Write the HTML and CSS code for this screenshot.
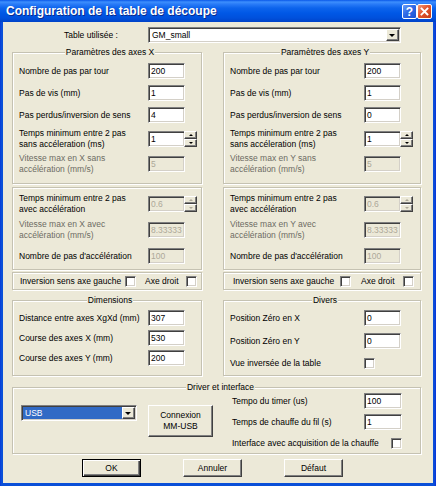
FILE: index.html
```html
<!DOCTYPE html>
<html lang="fr">
<head>
<meta charset="utf-8">
<title>Configuration de la table de découpe</title>
<link rel="stylesheet" href="styles.css">
</head>
<body>
<div class="window">
  <div class="titlebar">
    <span class="title">Configuration de la table de découpe</span>
    <div class="tb-buttons">
      <span class="tb-btn help">?</span>
      <span class="tb-btn close"><svg viewBox="0 0 13 13" width="13" height="13"><path d="M3.5 3.5 L9.5 9.5 M9.5 3.5 L3.5 9.5" stroke="#fff" stroke-width="1.8" stroke-linecap="square"/></svg></span>
    </div>
  </div>
  <div class="client">
    <div class="table-row">
      <span class="table-label">Table utilisée :</span>
      <div class="combo wide"><span class="combo-text">GM_small</span><span class="drop"><i class="tri"></i></span></div>
    </div>

    <div class="cols">
      <!-- Colonne X -->
      <div class="col col-x">
        <fieldset class="group">
          <legend>Paramètres des axes X</legend>
          <div class="row h22"><span class="lab">Nombre de pas par tour</span><span class="edit">200</span></div>
          <div class="row h22"><span class="lab">Pas de vis (mm)</span><span class="edit">1</span></div>
          <div class="row h22"><span class="lab">Pas perdus/inversion de sens</span><span class="edit">4</span></div>
          <div class="row h25"><span class="lab">Temps minimum entre 2 pas<br>sans accéleration (ms)</span><span class="edit">1</span><span class="spin"><i class="sb"><b class="up"></b></i><i class="sb"><b class="dn"></b></i></span></div>
          <div class="row h25"><span class="lab dim">Vitesse max en X sans<br>accélération (mm/s)</span><span class="edit off">5</span></div>
        </fieldset>
        <div class="frame">
          <div class="row h26"><span class="lab">Temps minimum entre 2 pas<br>avec accélération</span><span class="edit off">0.6</span><span class="spin off"><i class="sb"><b class="up"></b></i><i class="sb"><b class="dn"></b></i></span></div>
          <div class="row h26"><span class="lab dim">Vitesse max en X avec<br>accélération (mm/s)</span><span class="edit off">8.33333</span></div>
          <div class="row h26"><span class="lab">Nombre de pas d'accélération</span><span class="edit off">100</span></div>
        </div>
        <div class="frame inv">
          <span>Inversion sens axe gauche</span><span class="chk"></span><span class="axe">Axe droit</span><span class="chk"></span>
        </div>
      </div>

      <!-- Colonne Y -->
      <div class="col col-y">
        <fieldset class="group">
          <legend>Paramètres des axes Y</legend>
          <div class="row h22"><span class="lab">Nombre de pas par tour</span><span class="edit">200</span></div>
          <div class="row h22"><span class="lab">Pas de vis (mm)</span><span class="edit">1</span></div>
          <div class="row h22"><span class="lab">Pas perdus/inversion de sens</span><span class="edit">0</span></div>
          <div class="row h25"><span class="lab">Temps minimum entre 2 pas<br>sans accéleration (ms)</span><span class="edit">1</span><span class="spin"><i class="sb"><b class="up"></b></i><i class="sb"><b class="dn"></b></i></span></div>
          <div class="row h25"><span class="lab dim">Vitesse max en Y sans<br>accélération (mm/s)</span><span class="edit off">5</span></div>
        </fieldset>
        <div class="frame">
          <div class="row h26"><span class="lab">Temps minimum entre 2 pas<br>avec accélération</span><span class="edit off">0.6</span><span class="spin off"><i class="sb"><b class="up"></b></i><i class="sb"><b class="dn"></b></i></span></div>
          <div class="row h26"><span class="lab dim">Vitesse max en Y avec<br>accélération (mm/s)</span><span class="edit off">8.33333</span></div>
          <div class="row h26"><span class="lab">Nombre de pas d'accélération</span><span class="edit off">100</span></div>
        </div>
        <div class="frame inv">
          <span>Inversion sens axe gauche</span><span class="chk"></span><span class="axe">Axe droit</span><span class="chk"></span>
        </div>
      </div>

      <fieldset class="group col-x second">
        <legend>Dimensions</legend>
        <div class="row h20"><span class="lab">Distance entre axes XgXd (mm)</span><span class="edit">307</span></div>
        <div class="row h20"><span class="lab">Course des axes X (mm)</span><span class="edit">530</span></div>
        <div class="row h20"><span class="lab">Course des axes Y (mm)</span><span class="edit">200</span></div>
      </fieldset>

      <fieldset class="group col-y second divers">
        <legend>Divers</legend>
        <div class="row h20"><span class="lab">Position Zéro en X</span><span class="edit">0</span></div>
        <div class="row h20"><span class="lab">Position Zéro en Y</span><span class="edit">0</span></div>
        <div class="row h18"><span class="lab">Vue inversée de la table</span><span class="chk"></span></div>
      </fieldset>

      <fieldset class="group driver">
        <legend>Driver et interface</legend>
        <div class="drv">
          <div class="combo usb"><span class="combo-text sel">USB</span><span class="drop"><i class="tri"></i></span></div>
          <button class="btn connect">Connexion<br>MM-USB</button>
          <div class="drv-right">
            <span class="lab">Tempo du timer (us)</span><span class="edit">100</span>
            <span class="lab">Temps de chauffe du fil (s)</span><span class="edit">1</span>
            <div class="chkrow"><span>Interface avec acquisition de la chauffe</span><span class="chk"></span></div>
          </div>
        </div>
      </fieldset>
    </div>

    <div class="buttons">
      <button class="btn def">OK</button>
      <button class="btn">Annuler</button>
      <button class="btn">Défaut</button>
    </div>
  </div>
</div>
</body>
</html>
```

FILE: styles.css
```css
* { box-sizing: border-box; }
html, body { margin: 0; padding: 0; }
body {
  width: 436px;
  height: 486px;
  font-family: "Liberation Sans", Arial, sans-serif;
  font-size: 8.5px;
  color: #000;
  background: #fff;
}

.window {
  width: 436px;
  height: 486px;
  background: linear-gradient(to right, #0831d9 0, #0a4fd8 1px, #0a4fd8 434px, #0831d9 436px);
  display: flex;
  flex-direction: column;
}

.titlebar {
  height: 22px;
  flex: none;
  display: flex;
  align-items: center;
  padding: 0 4px 0 6px;
  background: linear-gradient(to bottom, #0a58e8 0, #3d8ffd 2px, #2a7cf8 4px, #0d64ec 8px, #0058e6 13px, #0050dc 18px, #0042c8 22px);
}
.title {
  flex: 1;
  color: #fff;
  font-weight: bold;
  font-size: 12px;
  text-shadow: 1px 1px 0 #0b2a8c;
  white-space: nowrap;
}
.tb-buttons { display: flex; margin-top: 1px; }
.tb-btn {
  width: 15px;
  height: 15px;
  border: 1px solid #fff;
  border-radius: 2px;
  display: flex;
  align-items: center;
  justify-content: center;
  color: #fff;
  font-weight: bold;
  font-size: 12px;
  line-height: 1;
}
.help { background: linear-gradient(135deg, #6a9ef8 0, #2f6ae6 45%, #1b50d2 100%); }
.close { background: linear-gradient(135deg, #f29a78 0, #e2562f 45%, #c53c17 100%); }

.client {
  flex: 1;
  margin: 0 3px 3px;
  background: #ece9d8;
  padding: 5px 0 0 9px;
}

/* top row */
.table-row {
  display: flex;
  align-items: center;
  height: 16px;
  padding-left: 52px;
}
.table-label { width: 84px; }

/* combo boxes */
.combo {
  display: flex;
  height: 16px;
  background: #fff;
  border: 1px solid;
  border-color: #808080 #fff #fff #808080;
  box-shadow: inset 1px 1px 0 #404040, inset -1px -1px 0 #d4d0c8;
  padding: 1px;
}
.combo.wide { width: 253px; }
.combo-text { flex: 1; padding-left: 2px; line-height: 12px; }
.combo-text.sel { background: #316ac5; color: #fff; }
.drop {
  width: 13px;
  height: 12px;
  background: #ece9d8;
  border: 1px solid;
  border-color: #fff #404040 #404040 #fff;
  box-shadow: inset -1px -1px 0 #808080;
  display: flex;
  align-items: center;
  justify-content: center;
}
.tri {
  width: 0;
  height: 0;
  border-left: 3px solid transparent;
  border-right: 3px solid transparent;
  border-top: 3px solid #000;
  margin-left: -1px;
}

/* main grid */
.cols {
  display: grid;
  grid-template-columns: 190px 198px;
  column-gap: 21px;
  margin-top: 4px;
}
.col-x { --lab: 129px; }
.col-y { --lab: 134px; }
.col { display: flex; flex-direction: column; }

fieldset.group {
  margin: 0;
  padding: 2px 0 7px 6px;
  min-width: 0;
  border: 1px solid #c5c2b2;
  box-shadow: inset 1px 1px 0 #fff, 1px 1px 0 #fff;
}
legend {
  margin: 0 auto;
  padding: 0 1px;
  line-height: 11px;
  height: 11px;
  background: #ece9d8;
}

.frame {
  border: 1px solid #c5c2b2;
  box-shadow: inset 1px 1px 0 #fff, 1px 1px 0 #fff;
  margin-top: 3px;
  padding: 3px 0 0 6px;
}
.frame.inv {
  margin-top: 2px;
  height: 18px;
  padding: 0 0 0 7px;
  display: grid;
  grid-template-columns: 105px 11px 50px 11px;
  align-items: center;
}
.frame.inv .axe { padding-left: 9px; }
.col-y .frame.inv {
  padding-left: 9px;
  grid-template-columns: 107px 11px 52px 11px;
}
.col-y .frame.inv .axe { padding-left: 10px; }

.row {
  display: grid;
  grid-template-columns: var(--lab) 37px 12px;
  align-items: center;
}
.h18 { height: 18px; }
.h20 { height: 20px; }
.h22 { height: 22px; }
.h25 { height: 25px; }
.h26 { height: 26px; }
.lab { line-height: 11px; white-space: nowrap; }
.lab.dim { color: #6d6c64; }

.edit {
  height: 16px;
  background: #fff;
  border: 1px solid;
  border-color: #808080 #fff #fff #808080;
  box-shadow: inset 1px 1px 0 #404040, inset -1px -1px 0 #d4d0c8;
  padding: 1px 0 0 2px;
  line-height: 12px;
  white-space: nowrap;
  overflow: hidden;
}
.edit.off { background: #ece9d8; color: #aca899; }

.spin {
  display: flex;
  flex-direction: column;
  height: 16px;
  margin-left: -1px;
}
.sb {
  height: 8px;
  background: #ece9d8;
  border: 1px solid;
  border-color: #fff #404040 #404040 #fff;
  box-shadow: inset -1px -1px 0 #808080;
  display: flex;
  align-items: center;
  justify-content: center;
}
.up, .dn {
  width: 0;
  height: 0;
  border-left: 2px solid transparent;
  border-right: 2px solid transparent;
}
.up { border-bottom: 2px solid #000; }
.dn { border-top: 2px solid #000; }
.spin.off .up { border-bottom-color: #aca899; }
.spin.off .dn { border-top-color: #aca899; }

.chk {
  width: 11px;
  height: 11px;
  background: #fff;
  border: 1px solid;
  border-color: #808080 #fff #fff #808080;
  box-shadow: inset 1px 1px 0 #404040, inset -1px -1px 0 #d4d0c8;
}

fieldset.group.second { margin-top: 5px; }
fieldset.group.divers { padding-bottom: 3px; }
.divers .row + .row { margin-top: 3px; }

fieldset.group.driver {
  grid-column: 1 / -1;
  margin-top: 6px;
  padding: 0 0 2px 8px;
}
.drv { display: flex; align-items: flex-start; height: 58px; }
.combo.usb { width: 116px; margin-top: 12px; }
.drv-right {
  margin-left: 19px;
  display: grid;
  grid-template-columns: 132px 38px;
  grid-auto-rows: 16px;
  row-gap: 5px;
  align-items: center;
}
.chkrow {
  grid-column: 1 / -1;
  display: flex;
  align-items: center;
  justify-content: space-between;
}

.btn {
  appearance: none;
  margin: 0;
  padding: 0;
  font: inherit;
  color: #000;
  background: #ece9d8;
  border: 1px solid;
  border-color: #fff #404040 #404040 #fff;
  box-shadow: inset -1px -1px 0 #808080;
  text-align: center;
  line-height: 11px;
}
.btn.connect {
  width: 65px;
  height: 32px;
  margin: 12px 0 0 11px;
}
.btn.def {
  border: 1px solid #000;
  box-shadow: inset 1px 1px 0 #fff, inset -1px -1px 0 #404040, inset -2px -2px 0 #808080;
}

.buttons {
  display: flex;
  gap: 42px;
  margin-top: 5px;
  padding-left: 70px;
}
.buttons .btn { width: 59px; height: 18px; }
```
